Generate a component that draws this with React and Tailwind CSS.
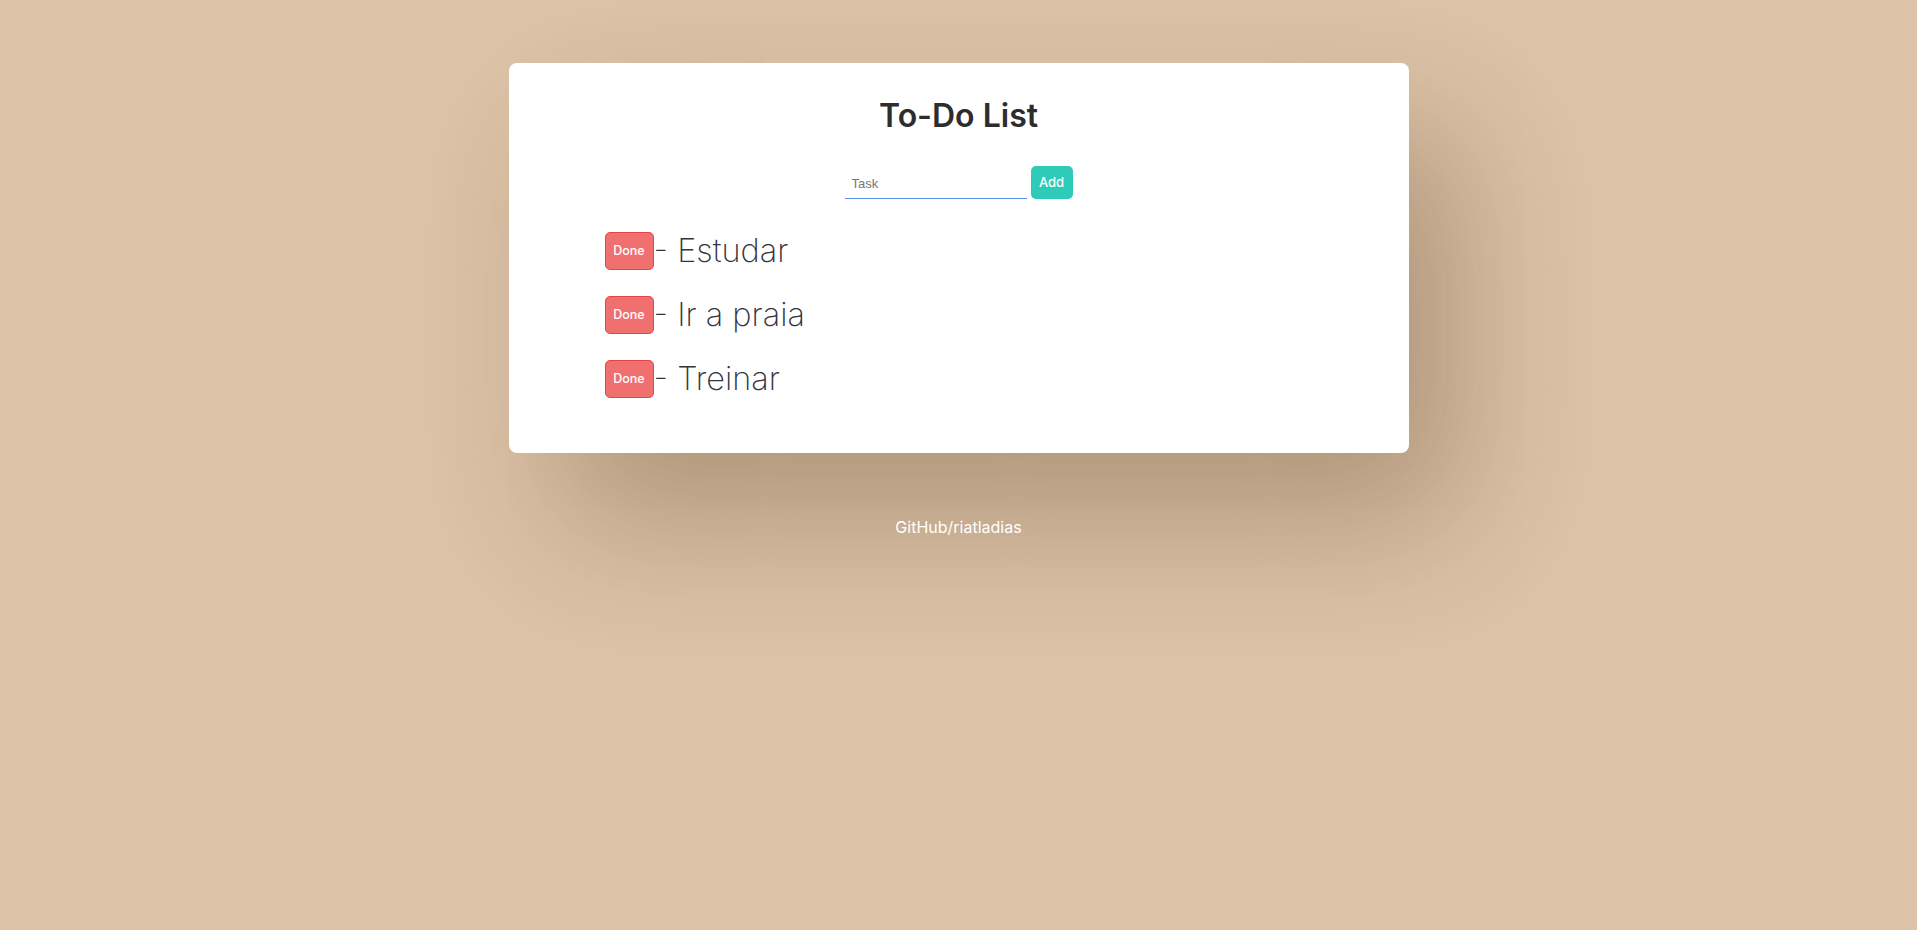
import React, { useState } from "react";

const App = () => {
  const [tasks] = useState(["Estudar", "Ir a praia", "Treinar"]);

  return (
    <div className="min-h-screen bg-[#ddc3a7] pt-[63px] font-['Inter',sans-serif]">
      {/* card */}
      <div className="mx-auto w-[900px] rounded-lg bg-white pt-[34px] pb-[55px] shadow-[50px_70px_140px_rgba(70,45,20,0.3)]">
        <h1 className="text-center text-[32px] leading-[38px] font-semibold text-[#2d2d2d]">
          To-Do List
        </h1>

        {/* add task form */}
        <div className="mt-[31px] flex items-end justify-center gap-1">
          <input
            type="text"
            placeholder="Task"
            className="h-[32px] w-[182px] border-b border-[#5b8ef0] px-[7px] pt-[2px] text-[13px] font-['Liberation_Sans',sans-serif] outline-none placeholder:text-[#767676]"
          />
          <button className="h-[33px] w-[42px] rounded-[5px] bg-[#2ecbb8] text-[13px] font-medium text-white">
            Add
          </button>
        </div>

        {/* tasks */}
        <ul className="mt-[33px] flex flex-col gap-[26px] pl-[96px]">
          {tasks.map((task) => (
            <li key={task} className="flex h-[38px] items-center">
              <button className="h-[38px] w-[49px] rounded-[5px] border border-[#e64545] bg-[#f07070] text-[12.5px] font-medium text-white">
                Done
              </button>
              <span className="text-[32.5px] leading-[38px] font-extralight text-[#33333d]">
                - {task}
              </span>
            </li>
          ))}
        </ul>
      </div>

      <p className="mt-[62px] text-center text-[16px] text-white">
        GitHub/riatladias
      </p>
    </div>
  );
};

export default App;
